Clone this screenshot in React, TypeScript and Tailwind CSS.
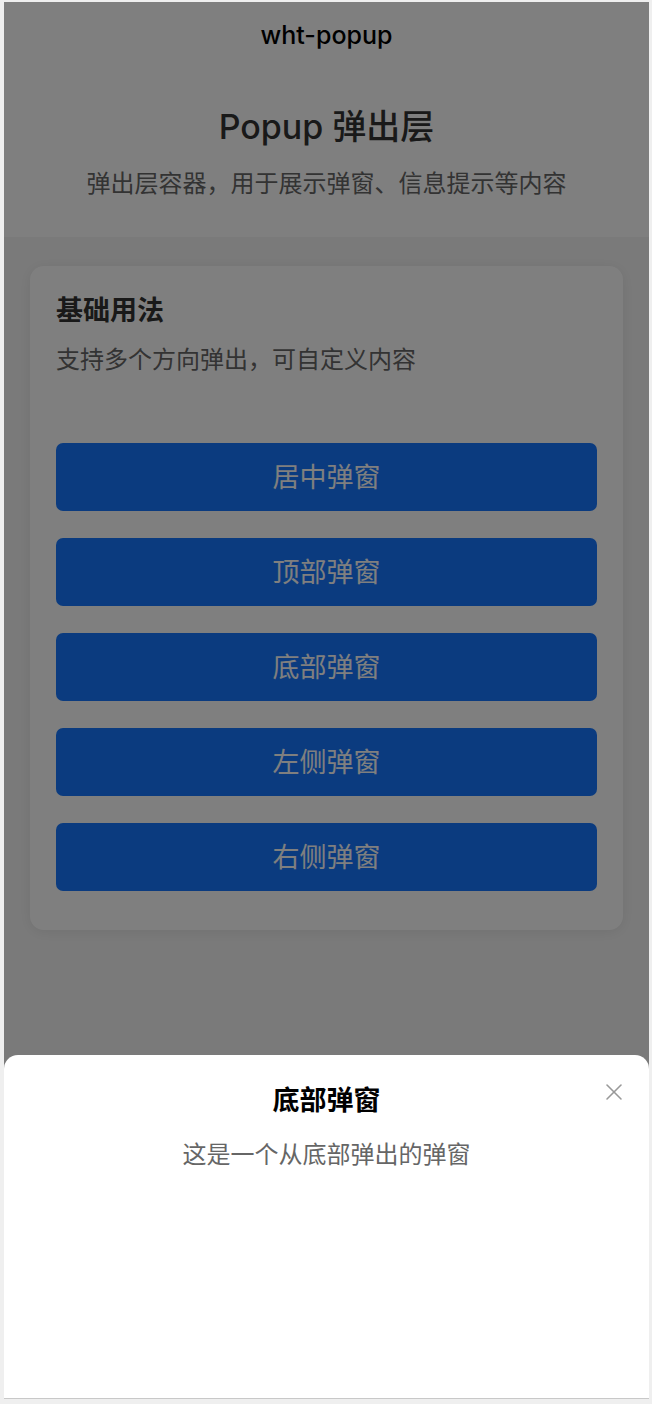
import { X } from 'lucide-react';

const font = { fontFamily: '"Liberation Sans", "Noto Sans CJK SC", sans-serif' };
const medium = { fontFamily: 'Inter, "Noto Sans CJK SC", sans-serif' };

const directions = ['居中弹窗', '顶部弹窗', '底部弹窗', '左侧弹窗', '右侧弹窗'];

export default function App() {
  return (
    <div className="w-[652px] h-[1404px] bg-[#efefef] pl-[4px] pr-[3px] pt-[2px] pb-[5px]" style={font}>
      <div className="relative h-full overflow-hidden bg-[#f5f5f5] border-b border-[#c8c8c8]">
        {/* Header */}
        <div className="bg-white">
          <div className="h-[66px] pt-[2px] flex items-center justify-center text-[25px] font-medium text-black" style={medium}>
            wht-popup
          </div>
          <div className="pt-[35px] pb-[36px] text-center">
            <h1 className="text-[34px] leading-[48px] font-medium text-[#333]" style={medium}>Popup 弹出层</h1>
            <p className="mt-[16px] text-[24px] leading-[34px] text-[#666]">
              弹出层容器，用于展示弹窗、信息提示等内容
            </p>
          </div>
        </div>

        {/* Basic usage card */}
        <div className="mx-[26px] mt-[29px] bg-white rounded-[14px] px-[26px] pt-[25px] pb-[39px] shadow-[0_2px_14px_rgba(0,0,0,0.08)]">
          <h2 className="text-[27px] leading-[40px] font-bold text-[#333]">基础用法</h2>
          <p className="mt-[12px] text-[24px] leading-[34px] text-[#666]">支持多个方向弹出，可自定义内容</p>
          <div className="mt-[66px] flex flex-col gap-[27px]">
            {directions.map(label => (
              <button
                key={label}
                className="h-[68px] w-full rounded-[7px] bg-[#1677ff] text-white text-[27px] pt-[3px]"
              >
                {label}
              </button>
            ))}
          </div>
        </div>

        {/* Overlay */}
        <div className="absolute inset-0 bg-black/50" />

        {/* Bottom popup */}
        <div className="absolute left-0 right-0 bottom-0 h-[343px] bg-white rounded-t-[14px] pt-[26px] text-center">
          <h3 className="text-[27px] leading-[40px] font-bold text-black">底部弹窗</h3>
          <p className="mt-[17px] text-[24px] leading-[34px] text-[#666]">这是一个从底部弹出的弹窗</p>
          <button className="absolute right-[21px] top-[23px] text-[#999]">
            <X size={28} strokeWidth={1.3} />
          </button>
        </div>
      </div>
    </div>
  );
}
